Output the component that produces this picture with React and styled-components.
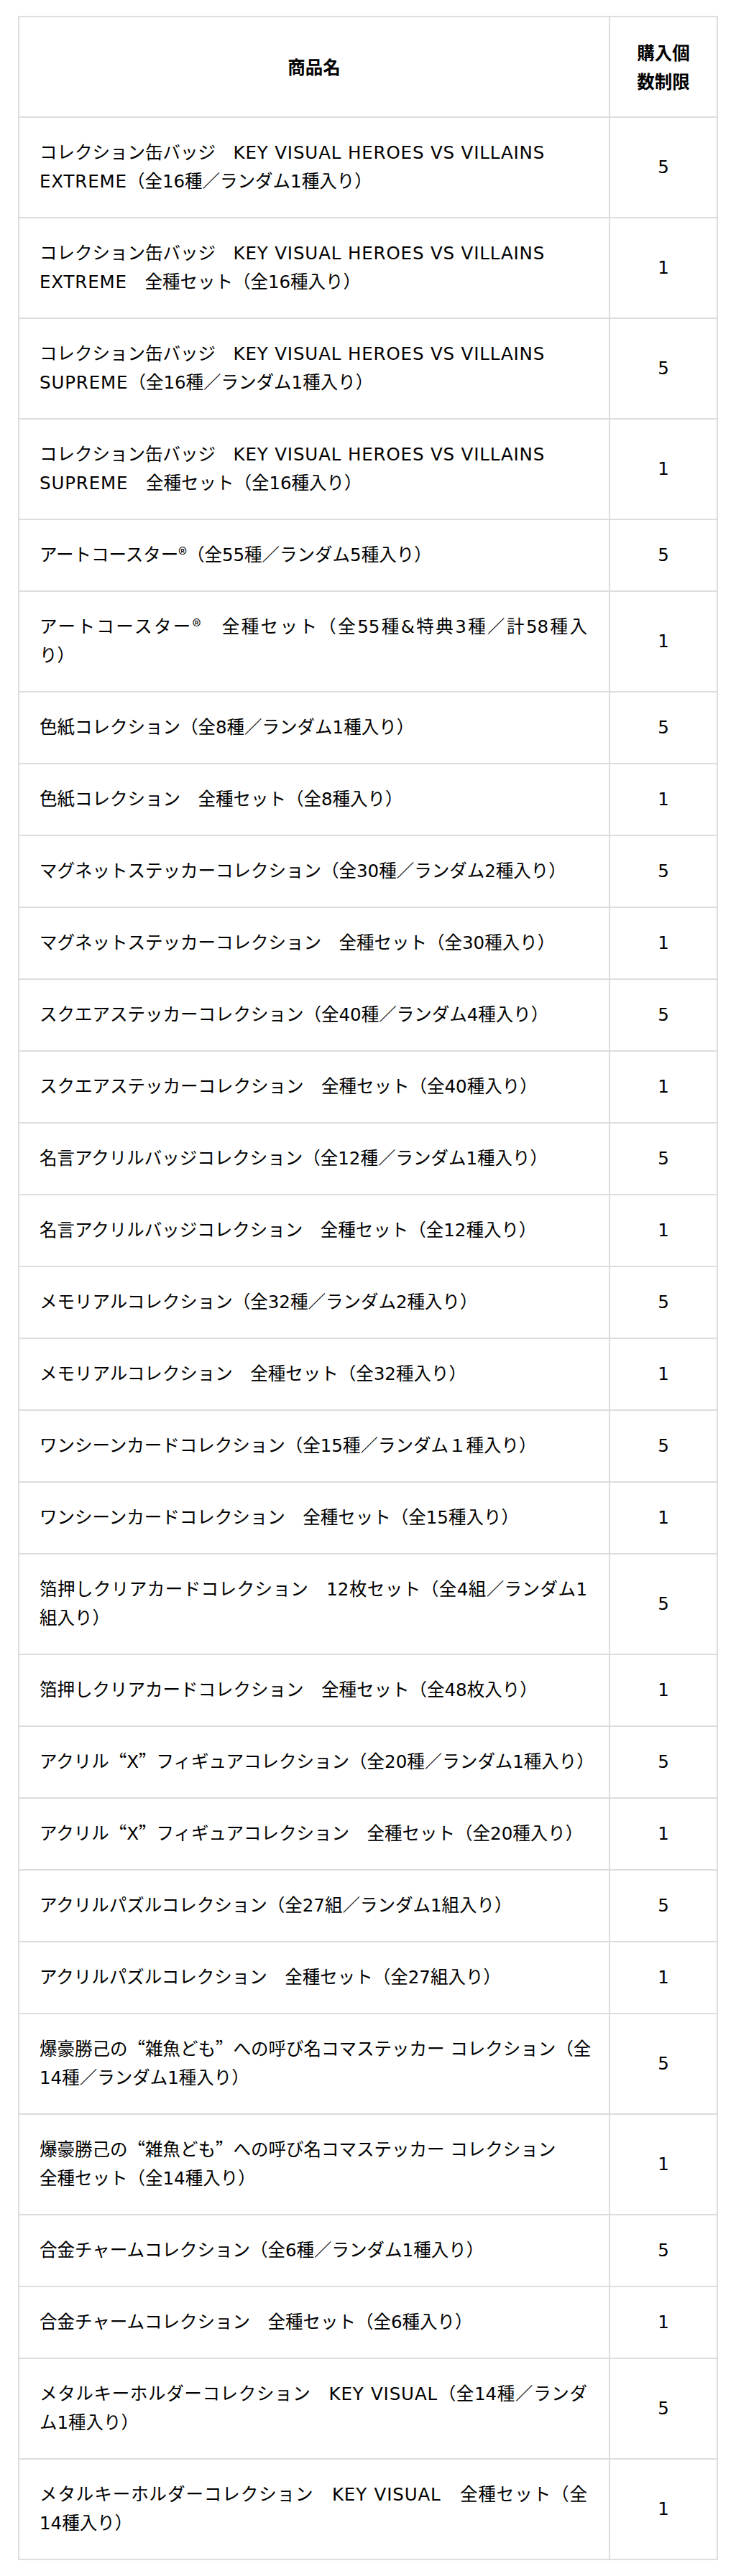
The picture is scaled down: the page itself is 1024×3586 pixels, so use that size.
import styled, { createGlobalStyle } from "styled-components";

// each item: [lines, limit, fillFirstLine]
const items = [
  [["コレクション缶バッジ　KEY VISUAL HEROES VS VILLAINS", "EXTREME（全16種／ランダム1種入り）"], 5],
  [["コレクション缶バッジ　KEY VISUAL HEROES VS VILLAINS", "EXTREME　全種セット（全16種入り）"], 1],
  [["コレクション缶バッジ　KEY VISUAL HEROES VS VILLAINS", "SUPREME（全16種／ランダム1種入り）"], 5],
  [["コレクション缶バッジ　KEY VISUAL HEROES VS VILLAINS", "SUPREME　全種セット（全16種入り）"], 1],
  [["アートコースター®（全55種／ランダム5種入り）"], 5],
  [["アートコースター®　全種セット（全55種&特典3種／計58種入", "り）"], 1, true],
  [["色紙コレクション（全8種／ランダム1種入り）"], 5],
  [["色紙コレクション　全種セット（全8種入り）"], 1],
  [["マグネットステッカーコレクション（全30種／ランダム2種入り）"], 5],
  [["マグネットステッカーコレクション　全種セット（全30種入り）"], 1],
  [["スクエアステッカーコレクション（全40種／ランダム4種入り）"], 5],
  [["スクエアステッカーコレクション　全種セット（全40種入り）"], 1],
  [["名言アクリルバッジコレクション（全12種／ランダム1種入り）"], 5],
  [["名言アクリルバッジコレクション　全種セット（全12種入り）"], 1],
  [["メモリアルコレクション（全32種／ランダム2種入り）"], 5],
  [["メモリアルコレクション　全種セット（全32種入り）"], 1],
  [["ワンシーンカードコレクション（全15種／ランダム１種入り）"], 5],
  [["ワンシーンカードコレクション　全種セット（全15種入り）"], 1],
  [["箔押しクリアカードコレクション　12枚セット（全4組／ランダム1", "組入り）"], 5, true],
  [["箔押しクリアカードコレクション　全種セット（全48枚入り）"], 1],
  [["アクリル“X”フィギュアコレクション（全20種／ランダム1種入り）"], 5],
  [["アクリル“X”フィギュアコレクション　全種セット（全20種入り）"], 1],
  [["アクリルパズルコレクション（全27組／ランダム1組入り）"], 5],
  [["アクリルパズルコレクション　全種セット（全27組入り）"], 1],
  [["爆豪勝己の“雑魚ども”への呼び名コマステッカー コレクション（全", "14種／ランダム1種入り）"], 5, true],
  [["爆豪勝己の“雑魚ども”への呼び名コマステッカー コレクション", "全種セット（全14種入り）"], 1],
  [["合金チャームコレクション（全6種／ランダム1種入り）"], 5],
  [["合金チャームコレクション　全種セット（全6種入り）"], 1],
  [["メタルキーホルダーコレクション　KEY VISUAL（全14種／ランダ", "ム1種入り）"], 5, true],
  [["メタルキーホルダーコレクション　KEY VISUAL　全種セット（全", "14種入り）"], 1, true],
];

const GlobalStyle = createGlobalStyle`
  body {
    margin: 0;
    background: #ffffff;
    color: #000000;
    font-family: "DejaVu Sans", "Noto Sans CJK JP", sans-serif;
  }
`;

const Page = styled.div`
  padding: 22px 25px;
`;

const Table = styled.table`
  width: 100%;
  border-collapse: collapse;
  table-layout: fixed;
  font-size: 24.5px;
  line-height: 40px;
`;

const HeadCell = styled.th`
  box-sizing: border-box;
  width: ${(p) => (p.$narrow ? "150px" : "auto")};
  border: 2px solid #dddddd;
  padding: 29px 28px;
  font-family: "Noto Sans CJK JP", sans-serif;
  font-weight: 700;
  text-align: center;
  vertical-align: middle;
`;

const NameCell = styled.td`
  border: 2px solid #dddddd;
  padding: 29px 30px 29px 28px;
  text-align: left;
  vertical-align: middle;
`;

const Line = styled.span`
  display: block;
  white-space: nowrap;
  text-align: ${(p) => (p.$fill ? "justify" : "left")};
  text-align-last: ${(p) => (p.$fill ? "justify" : "auto")};
  text-justify: inter-character;
`;

const Mark = styled.span`
  line-height: 1;
  font-family: "Noto Sans CJK JP", sans-serif;
  font-variant-east-asian: ${(p) => (p.$wide ? "full-width" : "normal")};
`;

const Latin = styled.span`
  letter-spacing: 0.035em;
`;

const LimitCell = styled.td`
  border: 2px solid #dddddd;
  padding: 29px 10px;
  text-align: center;
  vertical-align: middle;
`;

function Text({ value }) {
  return value.split(/([“”®]|[A-Z][A-Z ]*[A-Z])/).map((part, i) => {
    if (part === "®") return <Mark key={i}>®</Mark>;
    if (part === "“" || part === "”")
      return (
        <Mark key={i} $wide>
          {part}
        </Mark>
      );
    if (/^[A-Z][A-Z ]*[A-Z]$/.test(part)) return <Latin key={i}>{part}</Latin>;
    return part;
  });
}

export default function App() {
  return (
    <>
      <GlobalStyle />
      <Page>
        <Table>
          <thead>
            <tr>
              <HeadCell>商品名</HeadCell>
              <HeadCell $narrow>
                購入個
                <br />
                数制限
              </HeadCell>
            </tr>
          </thead>
          <tbody>
            {items.map(([lines, limit, fill], idx) => (
              <tr key={idx}>
                <NameCell>
                  {lines.map((line, i) => (
                    <Line key={i} $fill={fill && i === 0}>
                      <Text value={line} />
                    </Line>
                  ))}
                </NameCell>
                <LimitCell>{limit}</LimitCell>
              </tr>
            ))}
          </tbody>
        </Table>
      </Page>
    </>
  );
}
